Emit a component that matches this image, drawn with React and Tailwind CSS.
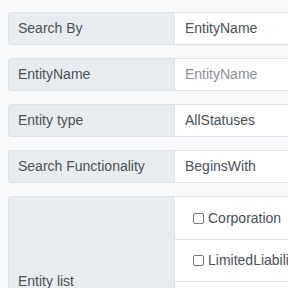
import React from "react";

const rows = [
  { label: "Search By", value: "EntityName" },
  { label: "EntityName", value: "EntityName", placeholder: true },
  { label: "Entity type", value: "AllStatuses" },
  { label: "Search Functionality", value: "BeginsWith" },
];

const entities = ["Corporation", "LimitedLiabilityCompany", "Partnership", "Trust"];

const App = () => {
  return (
    <div
      className="min-h-screen w-[288px] overflow-hidden bg-[#f8f9fa] pt-[12px] pl-[8px] text-[14px] text-[#495057]"
      style={{ fontFamily: '"Liberation Sans", Arial, sans-serif' }}
    >
      <div className="flex flex-col gap-[13px] w-[340px]">
        {rows.map((r) => (
          <div key={r.label} className="flex h-[33px]">
            <div className="w-[167px] shrink-0 flex items-center px-[9px] bg-[#e9ecef] border border-[#dee2e6] rounded-l-[3px]">
              {r.label}
            </div>
            <div
              className={
                "flex-1 flex items-center pl-[10px] bg-white border border-l-0 border-[#dee2e6] " +
                (r.placeholder ? "text-[#8a9299]" : "text-[#495057]")
              }
            >
              {r.value}
            </div>
          </div>
        ))}

        <div className="flex">
          <div className="w-[167px] shrink-0 flex items-center px-[9px] bg-[#e9ecef] border border-[#dee2e6] rounded-l-[3px]">
            Entity list
          </div>
          <div className="flex-1 flex flex-col bg-white border border-l-0 border-[#dee2e6]">
            {entities.map((e, i) => (
              <div
                key={e}
                className={
                  "flex items-center h-[42px] pl-[18px] gap-[4px] whitespace-nowrap " +
                  (i > 0 ? "border-t border-[#dee2e6]" : "")
                }
              >
                <span className="w-[11px] h-[11px] border border-[#767676] rounded-[2px] bg-white" />
                <span>{e}</span>
              </div>
            ))}
          </div>
        </div>
      </div>
    </div>
  );
};

export default App;
